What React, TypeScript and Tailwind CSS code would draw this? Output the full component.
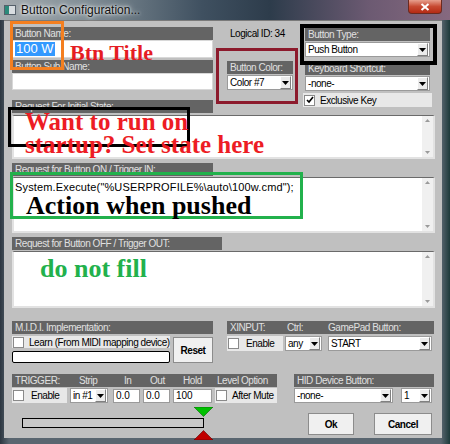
import React from "react";

type P = { children?: React.ReactNode; className?: string };

const NT = "text-[10px] tracking-[-0.45px]";

const Hdr = ({ children, className = "" }: P) => (
  <div
    className={`h-[13px] bg-[#646464] text-[#e0e0e0] ${NT} leading-[13px] pl-[3px] whitespace-nowrap overflow-hidden ${className}`}
  >
    {children}
  </div>
);

const Arrow = () => (
  <svg width="7" height="4" viewBox="0 0 7 4">
    <path d="M0 0h7L3.5 4z" fill="#000" />
  </svg>
);

const DropBtn = () => (
  <div className="w-[11px] h-[13px] my-auto mr-[1px] bg-[#ececec] border border-t-white border-l-white border-r-[#808080] border-b-[#808080] flex items-center justify-center shrink-0">
    <Arrow />
  </div>
);

const Select = ({ value, className = "" }: { value: string; className?: string }) => (
  <div className={`flex h-[15px] bg-white border border-[#9a9a9a] ${className}`}>
    <span className={`flex-1 pl-[2px] ${NT} leading-[13px] text-black whitespace-nowrap overflow-hidden`}>
      {value}
    </span>
    <DropBtn />
  </div>
);

const Check = ({ checked = false }: { checked?: boolean }) => (
  <span className="w-[11px] h-[11px] bg-white border border-[#8a8a8a] flex items-center justify-center shrink-0">
    {checked && (
      <svg width="8" height="8" viewBox="0 0 8 8">
        <path d="M1 4l2 2 4-5" stroke="#000" strokeWidth="1.6" fill="none" />
      </svg>
    )}
  </span>
);

const CheckRow = ({ label, checked = false, className = "" }: { label: string; checked?: boolean; className?: string }) => (
  <div className={`flex items-center gap-[5px] bg-[#e8e8e8] pl-[1px] ${NT} leading-[13px] text-black ${className}`}>
    <Check checked={checked} />
    <span className="whitespace-nowrap">{label}</span>
  </div>
);

const TextArea = ({ children, className = "" }: P) => (
  <div
    className={`flex w-[423px] bg-white border-t border-t-[#6a6a6a] border-l-2 border-l-[#e2e2e2] border-r-2 border-r-[#e2e2e2] border-b-2 border-b-[#e2e2e2] ${className}`}
  >
    <div className="flex-1 pl-[1px] pt-[2px] text-[11px] tracking-[0.15px] leading-[14px] text-black whitespace-nowrap overflow-hidden">
      {children}
    </div>
    <div className="w-[11px] bg-[#f0f0f0] flex flex-col justify-between items-center py-[3px]">
      <svg width="5" height="3" viewBox="0 0 5 3">
        <path d="M0 3h5L2.5 0z" fill="#9a9a9a" />
      </svg>
      <svg width="5" height="3" viewBox="0 0 5 3">
        <path d="M0 0h5L2.5 3z" fill="#9a9a9a" />
      </svg>
    </div>
  </div>
);

const Input = ({ value, className = "" }: { value: string; className?: string }) => (
  <div className={`h-[14px] bg-white border border-[#9a9a9a] pl-[2px] text-[10px] leading-[12px] text-black ${className}`}>
    {value}
  </div>
);

const Btn = ({ children, className = "" }: P) => (
  <div
    className={`bg-[#f0f0f0] border border-[#8c8c8c] flex items-center justify-center ${NT} font-bold text-black ${className}`}
  >
    {children}
  </div>
);

export default function App() {
  return (
    <div className="relative w-[450px] h-[444px] overflow-hidden font-['Liberation_Sans',Arial,sans-serif] bg-[linear-gradient(90deg,#2c3640_0%,#5a6670_2%,#5a6670_98%,#1d3a3a_100%)]">
      {/* title bar */}
      <div className="h-[20px] flex items-center bg-[linear-gradient(90deg,#a5acb0_0%,#7f8c94_20%,#3f5060_45%,#2d3c4b_60%,#6c5a72_82%,#86697f_100%)]">
        <div className="ml-[4px] w-[12px] h-[10px] bg-[#d8dde0] border border-[#55606a] flex">
          <div className="w-[4px] h-full bg-[#2a8a7a]" />
        </div>
        <span className="ml-[5px] text-[12px] text-[#111] [text-shadow:0_0_6px_#ffffff,0_0_3px_#ffffff]">
          Button Configuration...
        </span>
        <div className="ml-auto mr-[8px] self-start w-[34px] h-[14px] rounded-b-[4px] bg-[linear-gradient(180deg,#e7a08e_0%,#c74a32_50%,#b52a14_100%)] border border-[#6b2a20] border-t-0 flex items-center justify-center">
          <svg width="10" height="8" viewBox="0 0 10 8">
            <path d="M1.5 1l7 6M8.5 1l-7 6" stroke="#fff" strokeWidth="2" />
          </svg>
        </div>
      </div>

      {/* client area */}
      <div className="w-[438px] h-[418px] ml-[4px] bg-[#c0c0c0] border-t border-[#7a7a7a] pl-[8px] pt-[6px]">
        {/* top section */}
        <div className="flex items-start">
          <div className="w-[201px] flex flex-col">
            <Hdr>Button Name:</Hdr>
            <div className="h-[18px] bg-white border border-[#d8d8d8] pl-[2px] flex items-center">
              <span className="bg-[#3399ff] text-white text-[13px] leading-[14px] px-[1px]">100 W</span>
            </div>
            <Hdr className="mt-[2px]">Button Sub Name:</Hdr>
            <div className="h-[17px] bg-white border border-[#d8d8d8]" />
            <Hdr className="mt-[10px]">Request For Initial State:</Hdr>
          </div>

          <div className="ml-[14px] w-[66px] flex flex-col">
            <div className={`h-[13px] leading-[13px] ${NT} text-black pl-[3px] whitespace-nowrap`}>Logical ID: 34</div>
            <Hdr className="mt-[21px]">Button Color:</Hdr>
            <Select value="Color #7" className="mt-[1px]" />
          </div>

          <div className="ml-[12px] w-[125px] flex flex-col">
            <Hdr className="mt-[1px]">Button Type:</Hdr>
            <Select value="Push Button" className="mt-[1px]" />
            <Hdr className="mt-[5px]">Keyboard Shortcut:</Hdr>
            <Select value="-none-" className="mt-[1px]" />
            <CheckRow label="Exclusive Key" checked className="mt-[2px] h-[14px] -ml-[2px] w-[129px]" />
          </div>
        </div>

        <TextArea className="mt-[2px] h-[44px]"> </TextArea>

        <Hdr className="mt-[4px] w-[201px]">Request for Button ON / Trigger IN:</Hdr>
        <TextArea className="mt-[1px] h-[56px]">System.Execute("%USERPROFILE%\auto\100w.cmd");</TextArea>

        <Hdr className="mt-[4px] w-[210px]">Request for Button OFF / Trigger OUT:</Hdr>
        <TextArea className="mt-[1px] h-[57px]"> </TextArea>

        {/* MIDI + XINPUT */}
        <div className="mt-[13px] flex items-start">
          <div className="w-[201px]">
            <Hdr>M.I.D.I. Implementation:</Hdr>
            <div className="flex">
              <div className="w-[158px] flex flex-col">
                <CheckRow label="Learn (From MIDI mapping device)" className="mt-[2px] h-[12px]" />
                <div className="mt-[3px] h-[12px] bg-white border border-black rounded-[2px]" />
              </div>
              <Btn className="ml-[3px] mt-[3px] w-[40px] h-[26px]">Reset</Btn>
            </div>
          </div>
          <div className="ml-[14px] w-[207px]">
            <Hdr className="relative">
              <span>XINPUT:</span>
              <span className="absolute left-[60px]">Ctrl:</span>
              <span className="absolute left-[101px]">GamePad Button:</span>
            </Hdr>
            <div className="flex mt-[2px]">
              <CheckRow label="Enable" className="w-[56px] h-[15px] gap-[7px]" />
              <Select value="any" className="ml-[2px] w-[37px]" />
              <Select value="START" className="ml-[6px] w-[104px]" />
            </div>
          </div>
        </div>

        {/* TRIGGER + HID */}
        <div className="mt-[11px] flex items-start">
          <div className="w-[265px]">
            <Hdr className="relative">
              <span>TRIGGER:</span>
              <span className="absolute left-[67px]">Strip</span>
              <span className="absolute left-[112px]">In</span>
              <span className="absolute left-[138px]">Out</span>
              <span className="absolute left-[171px]">Hold</span>
              <span className="absolute left-[205px]">Level Option</span>
            </Hdr>
            <div className="flex items-center mt-[1px] h-[15px]">
              <CheckRow label="Enable" className="w-[55px] h-[15px] gap-[7px]" />
              <Select value="in #1" className="ml-[3px] w-[38px]" />
              <Input value="0.0" className="ml-[5px] w-[27px]" />
              <Input value="0.0" className="ml-[3px] w-[27px]" />
              <Input value="100" className="ml-[3px] w-[39px]" />
              <CheckRow label="After Mute" className="ml-[3px] w-[62px] h-[15px]" />
            </div>
          </div>
          <div className="ml-[17px] w-[140px]">
            <Hdr>HID Device Button:</Hdr>
            <div className="flex mt-[1px]">
              <Select value="-none-" className="w-[99px]" />
              <Select value="1" className="ml-[8px] w-[31px]" />
            </div>
          </div>
        </div>

        {/* slider + buttons */}
        <div className="flex items-start">
          <div className="relative w-[210px] h-[38px]">
            <div className="ml-[10px] mt-[15px] w-[182px] h-[10px] bg-[#c8c8c8] border border-black" />
            <svg className="absolute left-[182px] top-[4px]" width="20" height="10" viewBox="0 0 20 10">
              <path d="M0 0h19L9.5 9.5z" fill="#00c000" stroke="#006000" strokeWidth="0.6" />
            </svg>
            <svg className="absolute left-[182px] top-[27px]" width="20" height="10" viewBox="0 0 20 10">
              <path d="M0 10h19L9.5 0.5z" fill="#c00000" stroke="#600000" strokeWidth="0.6" />
            </svg>
          </div>
          <Btn className="ml-[86px] mt-[10px] w-[46px] h-[22px]">Ok</Btn>
          <Btn className="ml-[20px] mt-[10px] w-[58px] h-[22px]">Cancel</Btn>
        </div>
      </div>

      {/* annotations */}
      <div className="absolute left-[10px] top-[21px] w-[54px] h-[49px] border-[3px] border-[#f47f20]" />
      <div className="absolute left-[70px] top-[41px] text-[22px] font-bold text-[#e51c23] font-['Liberation_Serif',serif] leading-[24px]">
        Btn Title
      </div>
      <div className="absolute left-[216px] top-[48px] w-[82px] h-[56px] border-[3px] border-[#8c1a2c]" />
      <div className="absolute left-[300px] top-[24px] w-[137px] h-[41px] border-[4px] border-black" />
      <div className="absolute left-[8px] top-[107px] w-[182px] h-[40px] border-[3px] border-black" />
      <div className="absolute left-[25px] top-[110px] text-[25px] font-bold text-[#ed1c24] font-['Liberation_Serif',serif] leading-[23px] whitespace-nowrap">
        Want to run on
        <br />
        startup? Set state here
      </div>
      <div className="absolute left-[10px] top-[172px] w-[293px] h-[47px] border-[3px] border-[#22b14c]" />
      <div className="absolute left-[26px] top-[193px] text-[26px] font-bold text-black font-['Liberation_Serif',serif] leading-[26px] whitespace-nowrap">
        Action when pushed
      </div>
      <div className="absolute left-[40px] top-[256px] text-[26px] font-bold text-[#22b14c] font-['Liberation_Serif',serif] leading-[26px] whitespace-nowrap">
        do not fill
      </div>
    </div>
  );
}
